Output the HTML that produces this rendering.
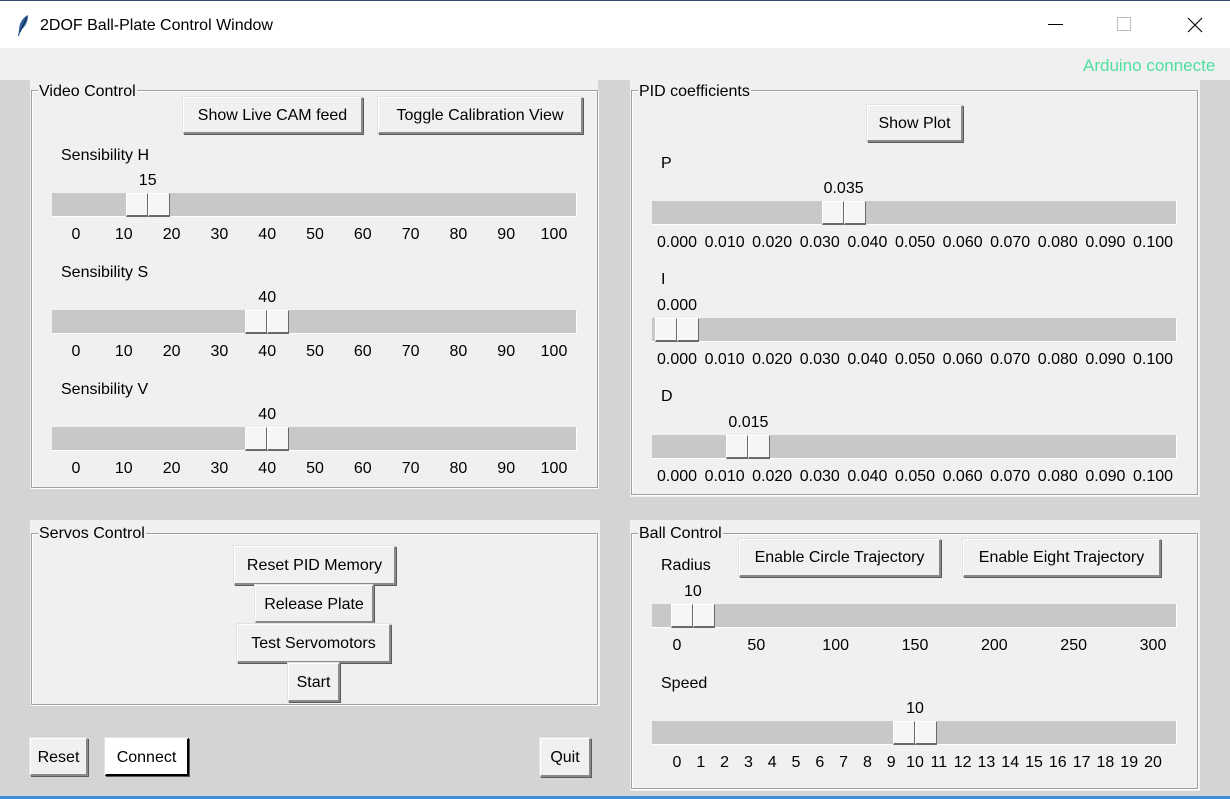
<!DOCTYPE html>
<html><head><meta charset="utf-8"><style>
*{margin:0;padding:0;box-sizing:border-box}
body{width:1230px;height:799px;overflow:hidden;background:#d4d4d4;font-family:"Liberation Sans",sans-serif;font-size:16px;color:#000;position:relative}
.a{position:absolute;white-space:nowrap}
.panel{position:absolute;background:#f0f0f0}
.frame{position:absolute;border:1px solid #a0a0a0;box-shadow:inset 1px 1px 0 #fff,1px 1px 0 #fff}
.lg{position:absolute;background:#f0f0f0;padding:0 1px;line-height:18px}
.btn{position:absolute;background:#f0f0f0;border-top:1px solid #fff;border-left:1px solid #fff;border-right:2px solid #8a8a8a;border-bottom:2px solid #8a8a8a;box-shadow:1px 1px 0 #5a5a5a, -1px -1px 0 #e3e3e3;text-align:center;line-height:37px;white-space:nowrap}
.tr{position:absolute;height:24px;background:#c8c8c8;border-right:1px solid #fff;border-bottom:1px solid #fff}
.th{position:absolute;top:0;width:22px;height:24px;background:#f6f6f6;border-top:1px solid #fff;border-left:1px solid #fff;border-right:1px solid #696969;border-bottom:2px solid #696969}
.c{position:absolute;transform:translateX(-50%);white-space:nowrap;line-height:18px}
</style></head><body>
<div class="a" style="left:0;top:0;width:1230px;height:1px;background:#2b4a6f"></div>
<div class="a" style="left:0;top:1px;width:1230px;height:47px;background:#fff"></div>
<svg class="a" style="left:16px;top:14px" width="14" height="24" viewBox="0 0 14 24"><path d="M12 1 C6 4 3 10 3 16 L2 22 L3 22 L5 16 C9 13 12 8 12 1Z" fill="#2f5f9a"/><path d="M11 3 L4 18" stroke="#0b2a4a" stroke-width="1"/></svg>
<div class="a" style="left:40px;top:17px;font-size:16px">2DOF Ball-Plate Control Window</div>
<div class="a" style="left:1048px;top:24px;width:15px;height:1px;background:#000"></div>
<div class="a" style="left:1117px;top:17px;width:14px;height:14px;border:1px solid #bbb"></div>
<svg class="a" style="left:1187px;top:17px" width="16" height="16"><path d="M1 1L15 15M15 1L1 15" stroke="#000" stroke-width="1.1"/></svg>
<div class="a" style="left:0;top:48px;width:1230px;height:32px;background:#f0f0f0"></div>
<div class="a" style="left:1083px;top:56px;color:#4fe0a0;font-size:17px">Arduino connecte</div>
<div class="a" style="left:0;top:796px;width:1230px;height:3px;background:#3c8fd8"></div>

<div class="panel" style="left:30px;top:80px;width:568px;height:409px"></div>
<div class="panel" style="left:630px;top:80px;width:570px;height:417px"></div>
<div class="panel" style="left:30px;top:520px;width:570px;height:186px"></div>
<div class="panel" style="left:630px;top:520px;width:570px;height:271px"></div>

<div class="frame" style="left:31px;top:90px;width:567px;height:398px"></div>
<div class="lg" style="left:38px;top:83px">Video Control</div>
<div class="frame" style="left:631px;top:90px;width:567px;height:405px"></div>
<div class="lg" style="left:638px;top:83px">PID coefficients</div>
<div class="frame" style="left:31px;top:533px;width:567px;height:172px"></div>
<div class="lg" style="left:38px;top:525px">Servos Control</div>
<div class="frame" style="left:631px;top:533px;width:567px;height:256px"></div>
<div class="lg" style="left:638px;top:525px">Ball Control</div>

<div class="btn" style="left:183px;top:97px;width:180px;height:37px;line-height:35px">Show Live CAM feed</div>
<div class="btn" style="left:378px;top:97px;width:205px;height:37px;line-height:35px">Toggle Calibration View</div>
<div class="btn" style="left:867px;top:105px;width:96px;height:37px;line-height:35px">Show Plot</div>
<div class="btn" style="left:739px;top:539px;width:202px;height:38px;line-height:35px">Enable Circle Trajectory</div>
<div class="btn" style="left:963px;top:539px;width:198px;height:38px;line-height:35px">Enable Eight Trajectory</div>
<div class="btn" style="left:234px;top:546px;width:162px;height:39px">Reset PID Memory</div>
<div class="btn" style="left:255px;top:585px;width:119px;height:38px">Release Plate</div>
<div class="btn" style="left:237px;top:624px;width:154px;height:39px">Test Servomotors</div>
<div class="btn" style="left:288px;top:663px;width:52px;height:39px">Start</div>
<div class="btn" style="left:30px;top:738px;width:58px;height:38px">Reset</div>
<div class="btn" style="left:105px;top:738px;width:84px;height:38px;background:#fff;border-right-color:#000;border-bottom-color:#000">Connect</div>
<div class="btn" style="left:540px;top:738px;width:51px;height:39px">Quit</div>

<div id="s"></div>
<script>
var S=[
["Sensibility H",61,155,52,193,"15",0.15,[0,10,20,30,40,50,60,70,80,90,100],76,478],
["Sensibility S",61,272,52,310,"40",0.40,[0,10,20,30,40,50,60,70,80,90,100],76,478],
["Sensibility V",61,389,52,427,"40",0.40,[0,10,20,30,40,50,60,70,80,90,100],76,478],
["P",661,163,652,201,"0.035",0.35,["0.000","0.010","0.020","0.030","0.040","0.050","0.060","0.070","0.080","0.090","0.100"],677,476],
["I",661,279,652,318,"0.000",0,["0.000","0.010","0.020","0.030","0.040","0.050","0.060","0.070","0.080","0.090","0.100"],677,476],
["D",661,396,652,435,"0.015",0.15,["0.000","0.010","0.020","0.030","0.040","0.050","0.060","0.070","0.080","0.090","0.100"],677,476],
["Radius",661,565,652,604,"10",10/300,[0,50,100,150,200,250,300],677,476],
["Speed",661,683,652,721,"10",0.5,[0,1,2,3,4,5,6,7,8,9,10,11,12,13,14,15,16,17,18,19,20],677,476]];
var h="";
S.forEach(function(s){
 h+='<div class="a" style="left:'+s[1]+'px;top:'+(s[2]-8)+'px;line-height:18px">'+s[0]+'</div>';
 var cx=s[8]+s[6]*s[9];
 h+='<div class="c" style="left:'+cx+'px;top:'+(s[4]-21)+'px">'+s[5]+'</div>';
 h+='<div class="tr" style="left:'+s[3]+'px;top:'+s[4]+'px;width:525px"><div class="th" style="left:'+(cx-22-s[3])+'px"></div><div class="th" style="left:'+(cx-s[3])+'px"></div></div>';
 var n=s[7].length;
 s[7].forEach(function(t,i){h+='<div class="c" style="left:'+(s[8]+i*s[9]/(n-1))+'px;top:'+(s[4]+33)+'px">'+t+'</div>';});
});
document.getElementById("s").innerHTML=h;
</script>
</body></html>
